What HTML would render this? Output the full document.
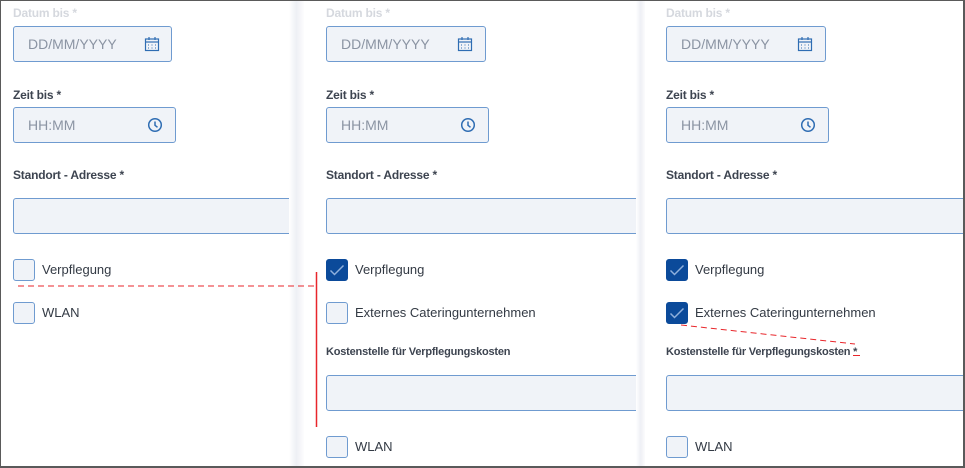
<!DOCTYPE html>
<html><head><meta charset="utf-8"><style>
*{box-sizing:border-box;margin:0;padding:0}
body{width:965px;height:468px;overflow:hidden;background:#fff;font-family:"Liberation Sans",Arial,sans-serif;position:relative}
.frame{position:absolute;left:0;top:0;width:965px;height:468px;border:1px solid #5a5a5a;border-right-width:2px;border-bottom-width:2px;z-index:10;pointer-events:none}
.gap{position:absolute;top:0;height:468px;background:linear-gradient(90deg,#fff,#eef0f5 45%,#f2f3f7 60%,#fff)}
.p{position:absolute;top:0;height:468px;background:#fff;overflow:hidden}
.lbl{position:absolute;font-size:12px;font-weight:bold;color:#3d4450;letter-spacing:-0.2px}
.lbl.f{color:#d5d8de;font-weight:normal}
.in{position:absolute;background:#f0f3f8;border:1px solid #6f9bd0;border-radius:3px;height:36px}
.ph{position:absolute;left:14px;top:9px;font-size:14px;color:#8b94a3}
.cb{position:absolute;width:22px;height:22px;border:1px solid #6f9bd0;border-radius:3px;background:#f0f3f8}
.cb.on{background:#0b4a9a;border-color:#0b4a9a}
.ct{position:absolute;font-size:13px;color:#333a44}
</style></head><body>
<div class="gap" style="left:289px;width:16px"></div>
<div class="gap" style="left:636px;width:10px"></div>

<!-- panel 1 -->
<div class="p" style="left:0;width:289px">
<div class="lbl f" style="left:13px;top:6px;font-weight:bold">Datum bis *</div>
<div class="in" style="left:13px;top:26px;width:159px"><span class="ph">DD/MM/YYYY</span>
<svg style="position:absolute;left:130px;top:9px" width="16" height="16" viewBox="0 0 16 16" fill="none" stroke="#2f6db3" stroke-width="1.2"><rect x="1.5" y="3" width="13" height="11.5"/><line x1="1.5" y1="6" x2="14.5" y2="6"/><line x1="5" y1="1" x2="5" y2="4"/><line x1="11" y1="1" x2="11" y2="4"/><path d="M4 9h1M7.5 9h1M11 9h1M4 12h1M7.5 12h1M11 12h1" stroke-width="1"/></svg></div>
<div class="lbl" style="left:13px;top:88px">Zeit bis *</div>
<div class="in" style="left:13px;top:107px;width:163px"><span class="ph">HH:MM</span>
<svg style="position:absolute;left:133px;top:9px" width="16" height="16" viewBox="0 0 16 16" fill="none" stroke="#2f6db3" stroke-width="1.5"><circle cx="8" cy="8" r="6.3"/><path d="M8 4.5V8.3l2.5 2"/></svg></div>
<div class="lbl" style="left:13px;top:168px">Standort - Adresse *</div>
<div class="in" style="left:13px;top:198px;width:290px"></div>
<div class="cb" style="left:13px;top:259px"></div><div class="ct" style="left:42px;top:262px">Verpflegung</div>
<div class="cb" style="left:13px;top:302px"></div><div class="ct" style="left:42px;top:305px">WLAN</div>
</div>

<!-- panel 2 -->
<div class="p" style="left:304px;width:332px">
<div class="lbl f" style="left:22px;top:6px;font-weight:bold">Datum bis *</div>
<div class="in" style="left:22px;top:26px;width:160px"><span class="ph">DD/MM/YYYY</span>
<svg style="position:absolute;left:130px;top:9px" width="16" height="16" viewBox="0 0 16 16" fill="none" stroke="#2f6db3" stroke-width="1.2"><rect x="1.5" y="3" width="13" height="11.5"/><line x1="1.5" y1="6" x2="14.5" y2="6"/><line x1="5" y1="1" x2="5" y2="4"/><line x1="11" y1="1" x2="11" y2="4"/><path d="M4 9h1M7.5 9h1M11 9h1M4 12h1M7.5 12h1M11 12h1" stroke-width="1"/></svg></div>
<div class="lbl" style="left:22px;top:88px">Zeit bis *</div>
<div class="in" style="left:22px;top:107px;width:163px"><span class="ph">HH:MM</span>
<svg style="position:absolute;left:133px;top:9px" width="16" height="16" viewBox="0 0 16 16" fill="none" stroke="#2f6db3" stroke-width="1.5"><circle cx="8" cy="8" r="6.3"/><path d="M8 4.5V8.3l2.5 2"/></svg></div>
<div class="lbl" style="left:22px;top:168px">Standort - Adresse *</div>
<div class="in" style="left:22px;top:198px;width:330px"></div>
<div class="cb on" style="left:22px;top:259px"><svg width="20" height="20" viewBox="0 0 20 20" fill="none" stroke="#8fb0dc" stroke-width="1.5"><path d="M3.5 10.5l4 4 9-9"/></svg></div><div class="ct" style="left:51px;top:262px">Verpflegung</div>
<div class="cb" style="left:22px;top:302px"></div><div class="ct" style="left:51px;top:305px">Externes Cateringunternehmen</div>
<div class="lbl" style="left:22px;top:346px;font-size:11px">Kostenstelle für Verpflegungskosten</div>
<div class="in" style="left:22px;top:375px;width:330px"></div>
<div class="cb" style="left:22px;top:436px"></div><div class="ct" style="left:51px;top:439px">WLAN</div>
</div>

<!-- panel 3 -->
<div class="p" style="left:645px;width:320px">
<div class="lbl f" style="left:21px;top:6px;font-weight:bold">Datum bis *</div>
<div class="in" style="left:21px;top:26px;width:160px"><span class="ph">DD/MM/YYYY</span>
<svg style="position:absolute;left:130px;top:9px" width="16" height="16" viewBox="0 0 16 16" fill="none" stroke="#2f6db3" stroke-width="1.2"><rect x="1.5" y="3" width="13" height="11.5"/><line x1="1.5" y1="6" x2="14.5" y2="6"/><line x1="5" y1="1" x2="5" y2="4"/><line x1="11" y1="1" x2="11" y2="4"/><path d="M4 9h1M7.5 9h1M11 9h1M4 12h1M7.5 12h1M11 12h1" stroke-width="1"/></svg></div>
<div class="lbl" style="left:21px;top:88px">Zeit bis *</div>
<div class="in" style="left:21px;top:107px;width:163px"><span class="ph">HH:MM</span>
<svg style="position:absolute;left:133px;top:9px" width="16" height="16" viewBox="0 0 16 16" fill="none" stroke="#2f6db3" stroke-width="1.5"><circle cx="8" cy="8" r="6.3"/><path d="M8 4.5V8.3l2.5 2"/></svg></div>
<div class="lbl" style="left:21px;top:168px">Standort - Adresse *</div>
<div class="in" style="left:21px;top:198px;width:330px"></div>
<div class="cb on" style="left:21px;top:259px"><svg width="20" height="20" viewBox="0 0 20 20" fill="none" stroke="#8fb0dc" stroke-width="1.5"><path d="M3.5 10.5l4 4 9-9"/></svg></div><div class="ct" style="left:50px;top:262px">Verpflegung</div>
<div class="cb on" style="left:21px;top:302px"><svg width="20" height="20" viewBox="0 0 20 20" fill="none" stroke="#8fb0dc" stroke-width="1.5"><path d="M3.5 10.5l4 4 9-9"/></svg></div><div class="ct" style="left:50px;top:305px">Externes Cateringunternehmen</div>
<div class="lbl" style="left:21px;top:346px;font-size:11px">Kostenstelle für Verpflegungskosten *</div>
<div class="in" style="left:21px;top:375px;width:330px"></div>
<div class="cb" style="left:21px;top:436px"></div><div class="ct" style="left:50px;top:439px">WLAN</div>
</div>

<svg style="position:absolute;left:0;top:0" width="965" height="468">
<line x1="18" y1="286" x2="316" y2="286" stroke="#e8262b" stroke-width="1" stroke-dasharray="6,4"/>
<line x1="316.5" y1="272" x2="316.5" y2="427" stroke="#e8262b" stroke-width="1.5"/>
<line x1="681" y1="325" x2="855" y2="344" stroke="#e8262b" stroke-width="1" stroke-dasharray="6,4"/>
<line x1="853" y1="355.5" x2="860" y2="355.5" stroke="#e8262b" stroke-width="1"/>
</svg>
<div class="frame"></div>
</body></html>
